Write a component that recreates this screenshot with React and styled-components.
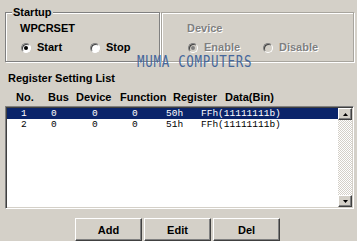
import styled, { createGlobalStyle, css } from "styled-components"

const GlobalStyle = createGlobalStyle`
  html, body {
    margin: 0;
    padding: 0;
    background: #d4d0c8;
    overflow: hidden;
  }
  body {
    font-family: "Liberation Sans", Arial, sans-serif;
    font-size: 11px;
    color: #000;
  }
`

const raised = css`
  border: 1px solid;
  border-color: #fff #404040 #404040 #fff;
  box-shadow: inset -1px -1px 0 #808080;
  background: #d4d0c8;
  box-sizing: border-box;
`

const Dialog = styled.div`
  position: relative;
  width: 357px;
  height: 241px;
  box-sizing: border-box;
  padding: 12px 2px 0 5px;
  display: flex;
  flex-direction: column;
`

const TopRow = styled.div`
  display: flex;
  align-items: flex-start;
`

const GroupBox = styled.div`
  position: relative;
  box-sizing: border-box;
  width: ${(p) => p.$width}px;
  height: 50px;
  margin-left: ${(p) => p.$offset || 0}px;
  border: 1px solid ${(p) => (p.$faint ? "#a8a59e" : "#808080")};
  box-shadow: inset 1px 1px 0 #fff, 1px 1px 0 #fff;
  padding: 9px 0 0 ${(p) => p.$indent}px;
  display: flex;
  flex-direction: column;
  gap: 6px;
`

const Caption = styled.span`
  position: absolute;
  top: -8px;
  left: 6px;
  padding: 0 1px;
  background: #d4d0c8;
  font-weight: bold;
  line-height: 14px;
`

const Label = styled.div`
  font-weight: bold;
  line-height: 13px;
  color: ${(p) => (p.$disabled ? "#808080" : "#000")};
  text-shadow: ${(p) => (p.$disabled ? "1px 1px 0 #fff" : "none")};
`

const RadioRow = styled.div`
  display: flex;
  align-items: center;
  padding-left: 1px;
`

const RadioOption = styled.label`
  display: flex;
  align-items: center;
  width: ${(p) => p.$width}px;
  font-weight: bold;
  line-height: 13px;
  color: ${(p) => (p.$disabled ? "#808080" : "#000")};
  text-shadow: ${(p) => (p.$disabled ? "1px 1px 0 #fff" : "none")};
`

const RadioDot = styled.span`
  position: relative;
  width: 10px;
  height: 10px;
  margin-right: 6px;
  box-sizing: border-box;
  border-radius: 50%;
  border: 1px solid;
  border-color: #808080 #fff #fff #808080;
  box-shadow: inset 1px 1px 0 #404040;
  background: ${(p) => (p.$disabled ? "#d4d0c8" : "#fff")};
  flex: none;

  &::after {
    content: "";
    display: ${(p) => (p.$checked ? "block" : "none")};
    position: absolute;
    left: 2px;
    top: 2px;
    width: 4px;
    height: 4px;
    border-radius: 50%;
    background: ${(p) => (p.$disabled ? "#808080" : "#000")};
  }
`

const Watermark = styled.div`
  position: absolute;
  left: 137px;
  top: 54px;
  font-family: "DejaVu Sans Mono", "Liberation Mono", monospace;
  font-size: 12.5px;
  letter-spacing: 0.7px;
  line-height: 11px;
  color: #46679b;
  transform: scaleY(1.3);
  transform-origin: top left;
  white-space: nowrap;
  pointer-events: none;
`

const SectionTitle = styled.div`
  margin-top: 9px;
  padding-left: 3px;
  font-weight: bold;
  line-height: 14px;
`

const HeaderRow = styled.div`
  margin-top: 5px;
  padding-left: 11px;
  display: grid;
  grid-template-columns: 32px 28px 44px 53px 52px auto;
  font-weight: bold;
  line-height: 14px;
`

const ListBox = styled.div`
  margin-top: 2px;
  width: 349px;
  height: 103px;
  box-sizing: border-box;
  border: 1px solid;
  border-color: #808080 #fff #fff #808080;
  box-shadow: inset 1px 1px 0 #404040, inset -1px -1px 0 #d4d0c8;
  padding: 1px;
  background: #fff;
  display: flex;
`

const Rows = styled.div`
  flex: 1;
`

const Row = styled.div`
  height: 11px;
  padding-left: 14px;
  display: grid;
  grid-template-columns: 30px 41px 40px 34px 35px auto;
  align-items: center;
  font-family: "Liberation Mono", "Courier New", monospace;
  font-size: 9.5px;
  line-height: 11px;
  background: ${(p) => (p.$selected ? "#0a246a" : "transparent")};
  color: ${(p) => (p.$selected ? "#fff" : "#000")};
  white-space: nowrap;
`

const ScrollBar = styled.div`
  width: 14px;
  display: flex;
  flex-direction: column;
`

const ScrollButton = styled.div`
  ${raised}
  height: 12px;
  display: flex;
  align-items: center;
  justify-content: center;
`

const Track = styled.div`
  flex: 1;
  background-color: #d4d0c8;
  background-image: repeating-conic-gradient(#fff 0 25%, #d4d0c8 0 50%);
  background-size: 2px 2px;
`

const ButtonRow = styled.div`
  margin-top: 9px;
  margin-left: 70px;
  display: flex;
  gap: 2px;
`

const PushButton = styled.button`
  ${raised}
  width: 67px;
  height: 23px;
  padding: 0;
  font-family: "Liberation Sans", Arial, sans-serif;
  font-size: 11px;
  font-weight: bold;
  color: #000;
`

const Arrow = ({ down }) => (
  <svg width="5" height="3" viewBox="0 0 5 3">
    <path d={down ? "M0 0h5L2.5 3z" : "M0 3h5L2.5 0z"} fill="#000" />
  </svg>
)

const rows = [
  { no: 1, bus: 0, device: 0, fn: 0, reg: "50h", data: "FFh(11111111b)" },
  { no: 2, bus: 0, device: 0, fn: 0, reg: "51h", data: "FFh(11111111b)" },
]

export default function App() {
  return (
    <>
      <GlobalStyle />
      <Dialog>
        <TopRow>
          <GroupBox $width={155} $indent={14}>
            <Caption>Startup</Caption>
            <Label>WPCRSET</Label>
            <RadioRow>
              <RadioOption $width={69}>
                <RadioDot $checked />
                Start
              </RadioOption>
              <RadioOption>
                <RadioDot />
                Stop
              </RadioOption>
            </RadioRow>
          </GroupBox>
          <GroupBox $width={193} $offset={1} $indent={25} $faint>
            <Label $disabled>Device</Label>
            <RadioRow>
              <RadioOption $width={75} $disabled>
                <RadioDot $checked $disabled />
                Enable
              </RadioOption>
              <RadioOption $disabled>
                <RadioDot $disabled />
                Disable
              </RadioOption>
            </RadioRow>
          </GroupBox>
        </TopRow>

        <SectionTitle>Register Setting List</SectionTitle>
        <HeaderRow>
          <span>No.</span>
          <span>Bus</span>
          <span>Device</span>
          <span>Function</span>
          <span>Register</span>
          <span>Data(Bin)</span>
        </HeaderRow>
        <ListBox>
          <Rows>
            {rows.map((r, i) => (
              <Row key={r.no} $selected={i === 0}>
                <span>{r.no}</span>
                <span>{r.bus}</span>
                <span>{r.device}</span>
                <span>{r.fn}</span>
                <span>{r.reg}</span>
                <span>{r.data}</span>
              </Row>
            ))}
          </Rows>
          <ScrollBar>
            <ScrollButton>
              <Arrow />
            </ScrollButton>
            <Track />
            <ScrollButton>
              <Arrow down />
            </ScrollButton>
          </ScrollBar>
        </ListBox>

        <ButtonRow>
          <PushButton>Add</PushButton>
          <PushButton>Edit</PushButton>
          <PushButton>Del</PushButton>
        </ButtonRow>

        <Watermark>MUMA COMPUTERS</Watermark>
      </Dialog>
    </>
  )
}
